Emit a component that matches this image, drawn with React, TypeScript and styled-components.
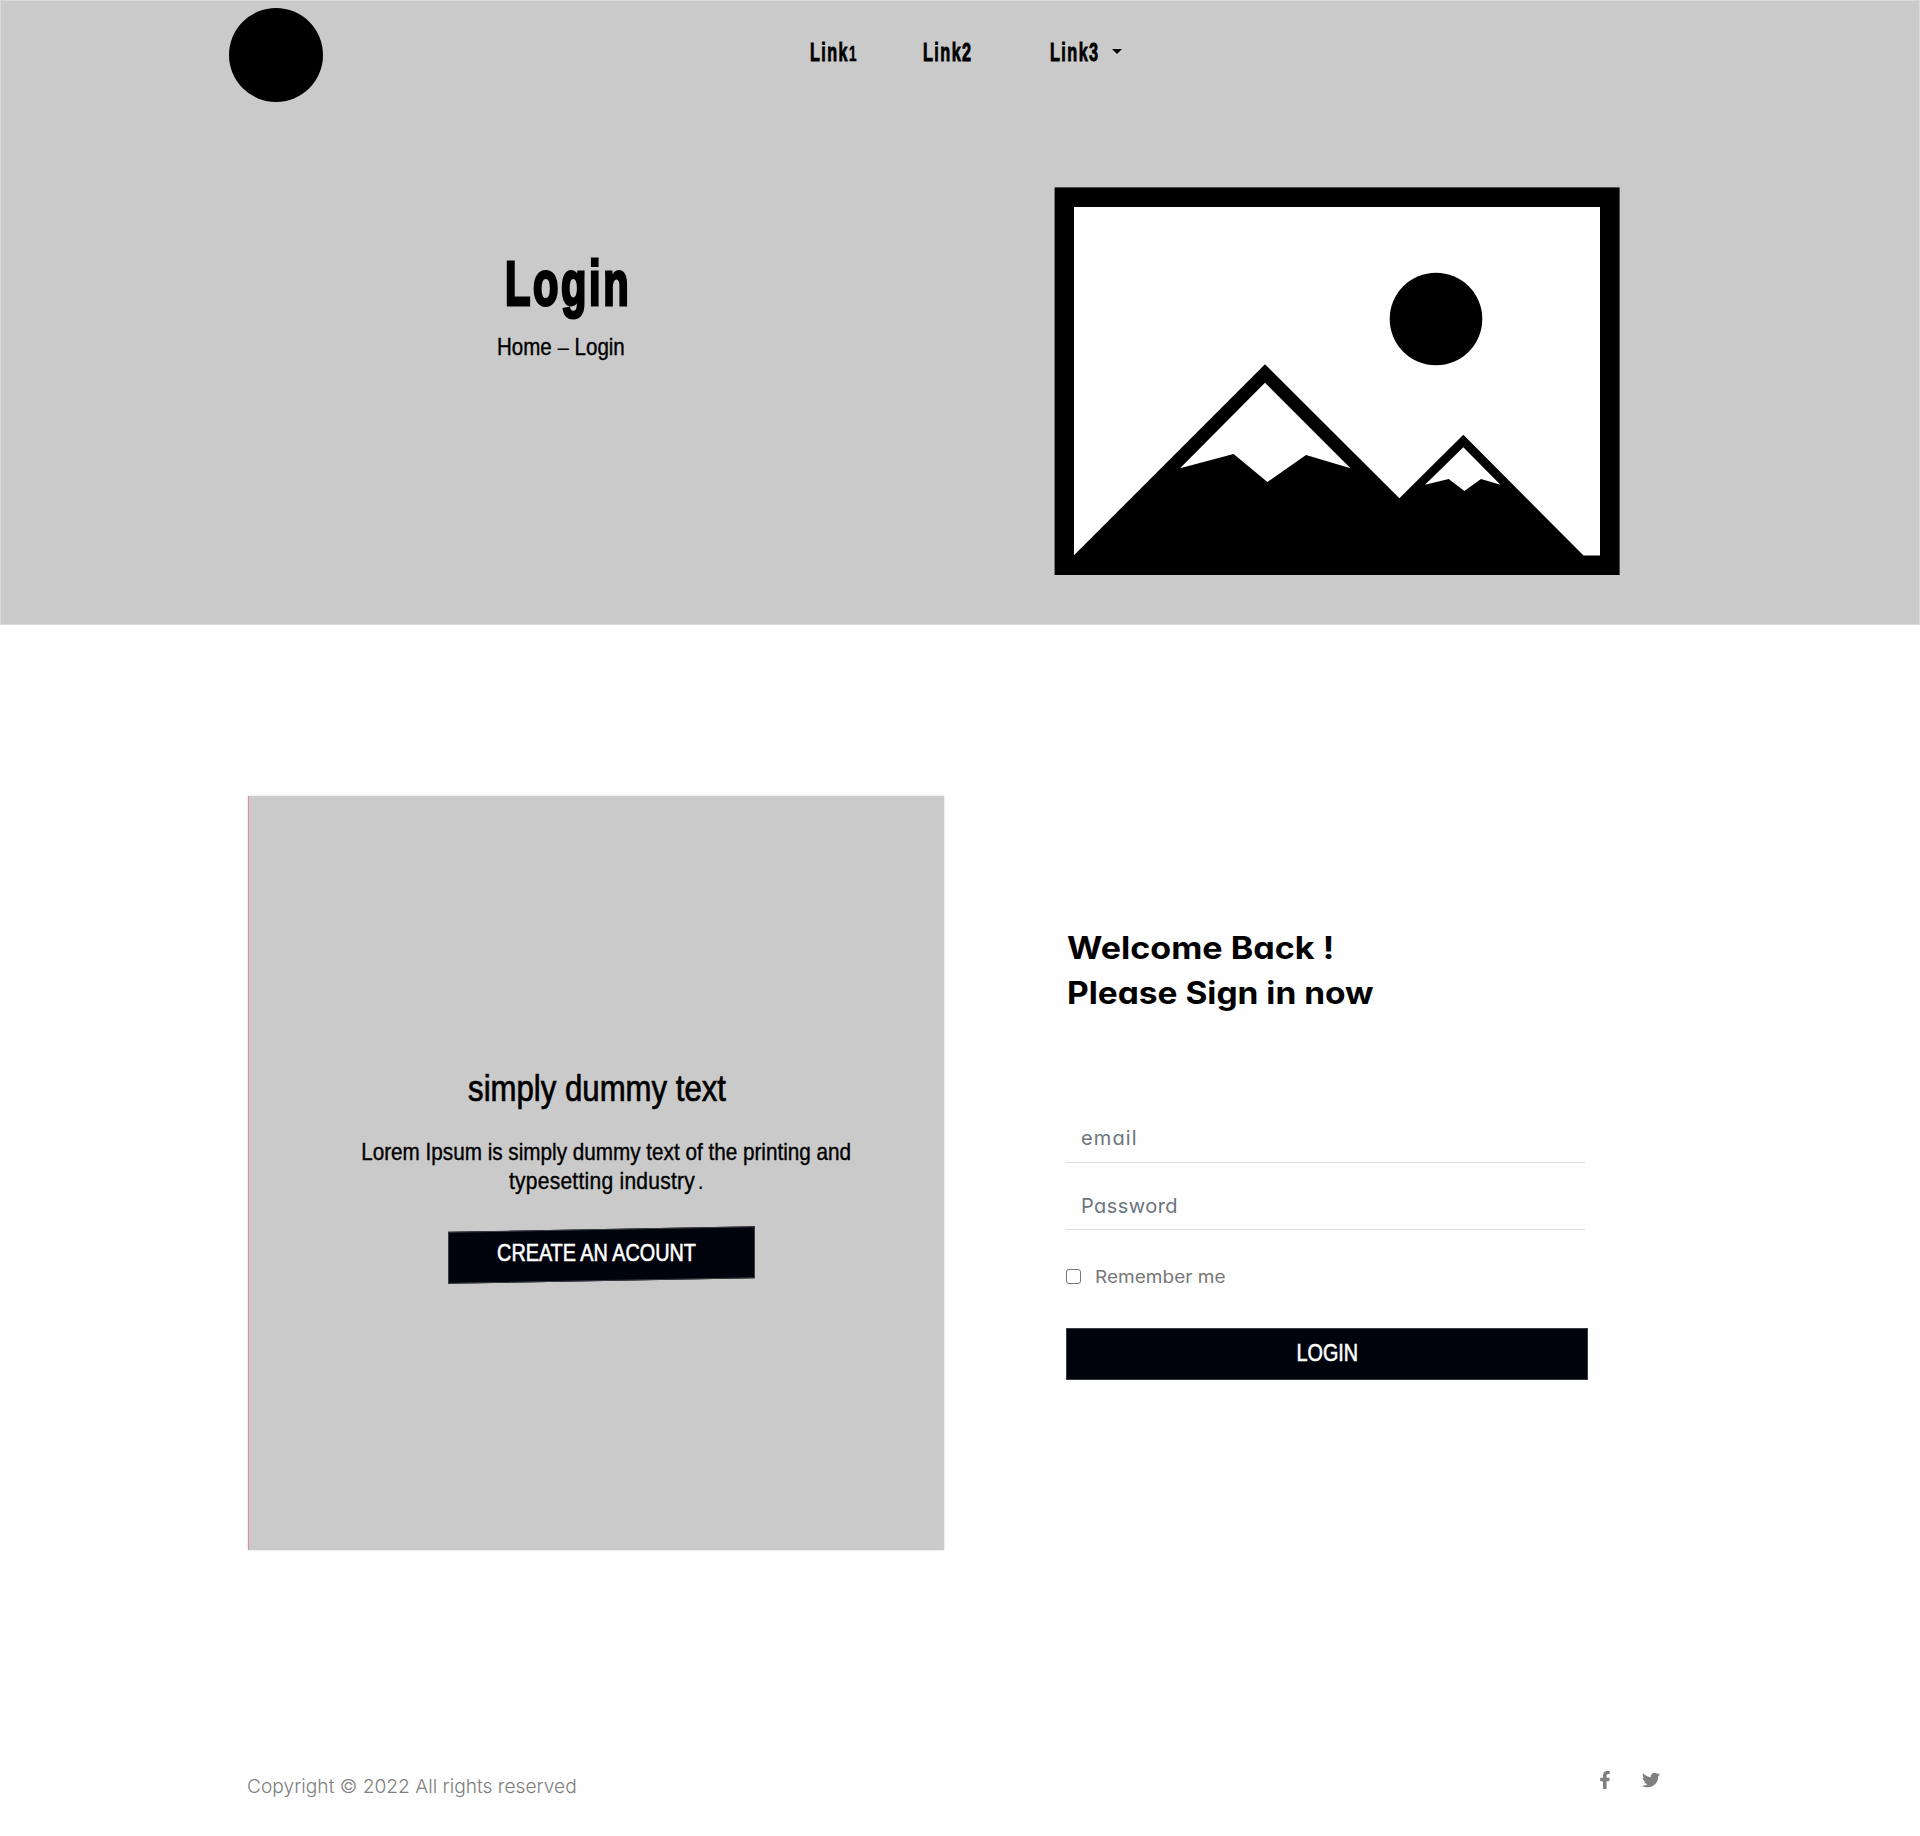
import React from "react";
import styled, { createGlobalStyle } from "styled-components";
import { FaFacebookF, FaTwitter } from "react-icons/fa";

const narrow = `"Liberation Sans", Arial, sans-serif`;
const round = `Inter, "Open Sans", sans-serif`;

const GlobalStyle = createGlobalStyle`
  * { box-sizing: border-box; }
  body { margin: 0; background: #fefefe; color: #000; font-family: ${round}; font-feature-settings: "cv11"; }
  h1, h2, p { margin: 0; font-weight: 400; }
  a { color: inherit; text-decoration: none; }
`;

/* Text set in a face squeezed or widened horizontally by "ratio". */
const Squeezed = styled.span<{ $ratio: number; $origin?: string; $spacing?: number }>`
  display: block;
  width: max-content;
  white-space: nowrap;
  letter-spacing: ${(p) => p.$spacing ?? 0}px;
  transform: scaleX(${(p) => p.$ratio});
  transform-origin: ${(p) => p.$origin ?? "left"} center;
`;

const Page = styled.div`
  width: 1920px;
  height: 1836px;
  overflow: hidden;
`;

const Header = styled.header`
  height: 625px;
  background: #cacaca;
  border: 1px solid #dadada;
`;

const Bar = styled.div`
  display: flex;
  height: 119px;
  padding: 7px 0 0 228px;
`;

const Logo = styled.div`
  width: 94px;
  height: 94px;
  border-radius: 50%;
  background: #000;
`;

const Nav = styled.nav`
  display: flex;
  margin: 29px 0 0 487px;
  font: 700 25px/31px ${narrow};
  -webkit-text-stroke: 0.9px #000;
`;

const NavItem = styled.a<{ $width: number }>`
  width: ${(p) => p.$width}px;
  height: 31px;
`;

const SmallDigit = styled.span`
  font-size: 22px;
  -webkit-text-stroke: 0.3px #000;
`;

const Caret = styled.span`
  margin-top: 12px;
  width: 10px;
  height: 5px;
  background: #000;
  clip-path: polygon(0 0, 100% 0, 50% 100%);
`;

const Hero = styled.div`
  display: flex;
`;

const HeroText = styled.div`
  width: 1053px;
  padding: 131px 0 0 496px;
`;

const Title = styled.h1`
  padding-left: 8px;
  font: 700 63px/64px ${narrow};
  -webkit-text-stroke: 3px #000;
`;

const Crumbs = styled.p`
  margin-top: 17px;
  font: 400 24px/30px ${narrow};
  -webkit-text-stroke: 0.4px #000;
`;

const Thin = styled.span`
  -webkit-text-stroke: 0;
`;

const Picture = styled.svg`
  display: block;
  margin-top: 67px;
`;

const Main = styled.main`
  display: flex;
  padding: 171px 0 0 248px;
`;

const Promo = styled.section`
  display: flex;
  flex-direction: column;
  align-items: center;
  width: 696px;
  height: 754px;
  padding-top: 273px;
  background: #cacaca;
  border-left: 1px solid #dd8fa2;
  box-shadow: 0 0 2px #d4d4d4;
`;

const PromoTitle = styled.h2`
  padding-left: 1px;
  font: 400 36px/40px ${narrow};
  -webkit-text-stroke: 0.7px #000;
`;

const PromoCopy = styled.p`
  display: flex;
  flex-direction: column;
  align-items: center;
  margin-top: 28px;
  padding-left: 19px;
  font: 400 24px/29px ${narrow};
  -webkit-text-stroke: 0.4px #000;
`;

const Stop = styled.span`
  margin-left: 3px;
  -webkit-text-stroke: 0;
`;

const Button = styled.button<{ $width: number; $tilt?: number }>`
  display: flex;
  align-items: center;
  justify-content: center;
  width: ${(p) => p.$width}px;
  height: 52px;
  padding: 0 0 3px;
  border: 1px solid #3a3c43;
  background: #01030c;
  color: #fff;
  font: 400 24px/30px ${narrow};
  -webkit-text-stroke: 0.6px #fff;
  transform: skewY(${(p) => -(p.$tilt ?? 0)}deg);
`;

const Level = styled.span<{ $tilt: number }>`
  transform: skewY(${(p) => p.$tilt}deg);
`;

const PromoAction = styled.div`
  margin-top: 34px;
  padding-left: 9px;
`;

const ButtonLabel = styled.span`
  display: block;
  padding: 0 11px 2px 0;
`;

const Form = styled.form`
  display: flex;
  flex-direction: column;
  align-items: flex-start;
  margin-left: 122px;
  padding-top: 129px;
`;

const Greeting = styled.h2`
  margin-left: 1px;
  font: 700 31px/45px ${round};
  font-feature-settings: "cv11";
`;

const Field = styled.input<{ $gap: number; $spacing: number; $lift?: number }>`
  width: 519px;
  height: 48px;
  margin-top: ${(p) => p.$gap}px;
  padding: 0 15px ${(p) => p.$lift ?? 0}px;
  border: 0;
  border-bottom: 1px solid #dcdcdc;
  background: transparent;
  outline: none;
  font: 400 20px ${round};
  font-feature-settings: "cv11";
  letter-spacing: ${(p) => p.$spacing}px;
  &::placeholder { color: #6c757d; opacity: 1; }
`;

const Remember = styled.label`
  display: flex;
  align-items: center;
  height: 20px;
  margin: 36px 0 42px;
  color: #777;
  font-size: 17px;
`;

const RememberText = styled.span`
  padding-top: 2px;
`;

const Check = styled.input`
  appearance: none;
  width: 15px;
  height: 15px;
  margin: 0 14px 0 0;
  border: 1px solid #767676;
  border-radius: 3px;
  background: #fff;
`;

const Footer = styled.footer`
  display: flex;
  justify-content: space-between;
  margin-top: 221px;
  padding: 0 260px 0 247px;
`;

const Copyright = styled.p`
  padding-top: 1px;
  color: #808080;
  font: 300 19px/30px ${round};
  font-feature-settings: "cv11";
`;

const Social = styled.div`
  display: flex;
  align-items: center;
  gap: 28px;
  height: 18px;
  color: #7f7f7f;
`;

const Placeholder = () => (
  <Picture width="566" height="389" viewBox="1054 187 566 389">
    <rect x="1054.6" y="187.4" width="565" height="387.6" />
    <path fill="#fff" d="M1074 207H1600V555.6H1583.5L1463.3 434.7L1399.4 498.3L1265 364.3L1074 555.2Z" />
    <circle cx="1436" cy="319" r="46.3" />
    <path fill="#fff" d="M1265 382.7L1350.5 468.3L1306 455L1267.4 482L1233.6 454L1180 468.3Z" />
    <path fill="#fff" d="M1463.3 447.3L1500.5 484.7L1481 479L1464.4 491L1448.7 479L1425 484.7Z" />
  </Picture>
);

export default function App() {
  return (
    <Page>
      <GlobalStyle />
      <Header>
        <Bar>
          <Logo />
          <Nav>
            <NavItem href="#" $width={113}>
              <Squeezed $ratio={0.645} $spacing={2.2}>Link<SmallDigit>1</SmallDigit></Squeezed>
            </NavItem>
            <NavItem href="#" $width={127}>
              <Squeezed $ratio={0.65} $spacing={2.2}>Link2</Squeezed>
            </NavItem>
            <NavItem href="#" $width={62}>
              <Squeezed $ratio={0.65} $spacing={2.2}>Link3</Squeezed>
            </NavItem>
            <Caret />
          </Nav>
        </Bar>
        <Hero>
          <HeroText>
            <Title><Squeezed $ratio={0.66} $spacing={4}>Login</Squeezed></Title>
            <Crumbs><Squeezed $ratio={0.855}>Home <Thin>–</Thin> Login</Squeezed></Crumbs>
          </HeroText>
          <Placeholder />
        </Hero>
      </Header>
      <Main>
        <Promo>
          <PromoTitle><Squeezed $ratio={0.865} $origin="center">simply dummy text</Squeezed></PromoTitle>
          <PromoCopy>
            <Squeezed $ratio={0.862} $origin="center">Lorem Ipsum is simply dummy text of the printing and</Squeezed>
            <Squeezed $ratio={0.875} $origin="center" $spacing={0.3}>typesetting industry<Stop>.</Stop></Squeezed>
          </PromoCopy>
          <PromoAction>
            <Button type="button" $width={307} $tilt={1.06}>
              <Level $tilt={1.06}>
                <ButtonLabel><Squeezed $ratio={0.825} $origin="center">CREATE AN ACOUNT</Squeezed></ButtonLabel>
              </Level>
            </Button>
          </PromoAction>
        </Promo>
        <Form>
          <Greeting>
            <Squeezed $ratio={1.1}>Welcome Back !</Squeezed>
            <Squeezed $ratio={1.08}>Please Sign in now</Squeezed>
          </Greeting>
          <Field type="text" placeholder="email" $gap={100} $spacing={1.1} $lift={2} />
          <Field type="password" placeholder="Password" $gap={19} $spacing={0.45} />
          <Remember>
            <Check type="checkbox" />
            <RememberText><Squeezed $ratio={1.12}>Remember me</Squeezed></RememberText>
          </Remember>
          <Button type="button" $width={522}>
            <Squeezed $ratio={0.825} $origin="center">LOGIN</Squeezed>
          </Button>
        </Form>
      </Main>
      <Footer>
        <Copyright><Squeezed $ratio={1.01}>Copyright © 2022 All rights reserved</Squeezed></Copyright>
        <Social>
          <FaFacebookF size={18} />
          <FaTwitter size={18} />
        </Social>
      </Footer>
    </Page>
  );
}
